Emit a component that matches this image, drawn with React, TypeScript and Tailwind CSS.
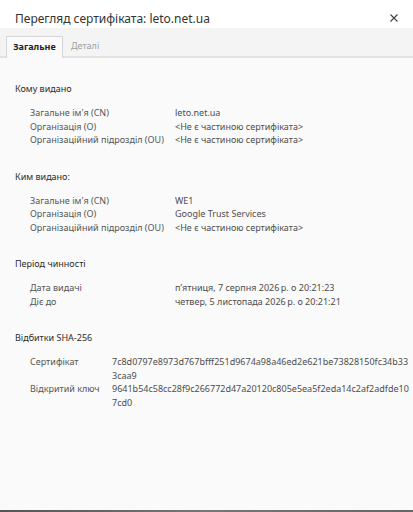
import React from "react";

const font = { fontFamily: '"Noto Sans", "Open Sans", sans-serif' };

function Row({ label, value, valueX = 175 }: { label: string; value: React.ReactNode; valueX?: number }) {
  return (
    <div className="flex leading-[13.5px]">
      <div
        className={"shrink-0 pl-[30px] text-[#555] " + (valueX === 175 ? "w-[175px]" : "w-[112px]")}
      >
        {label}
      </div>
      <div className="text-[#4d4d4d]">{value}</div>
    </div>
  );
}

function Section({ title, children, first }: { title: string; children: React.ReactNode; first?: boolean }) {
  return (
    <div className={first ? "" : "mt-[23px]"}>
      <div className="h-[14px] pl-[15px] leading-[14px] text-[#2b2b2b]">{title}</div>
      <div className="mt-[10px]">{children}</div>
    </div>
  );
}

export default function App() {
  return (
    <div className="flex h-[512px] w-[413px] flex-col overflow-hidden bg-[#fafafa] text-[9px]" style={font}>
      <div className="flex h-[28px] shrink-0 items-center justify-between bg-white pl-[15px] pr-[15px] pt-[9px]">
        <div className="text-[12px] leading-[19px] text-[#333]">Перегляд сертифіката: leto.net.ua</div>
        <svg width="8" height="8" viewBox="0 0 8 8" className="mb-[2px]">
          <path d="M0.5 0.5L7.5 7.5M7.5 0.5L0.5 7.5" stroke="#444" strokeWidth="1.2" />
        </svg>
      </div>
      <div className="flex h-[30px] shrink-0 items-end border-b-2 border-[#e2e2e2] bg-[#f4f4f4] pl-[6px]">
        <div className="-mb-[2px] flex h-[22px] w-[57px] items-center justify-center border border-b-0 border-[#d6d6d6] bg-[#fafafa] pb-[1px] font-bold text-[#222]">
          Загальне
        </div>
        <div className="flex h-[20px] items-center pl-[8px] text-[#a0a0a0]">Деталі</div>
      </div>
      <div className="flex-1 pt-[24px]">
        <Section title="Кому видано" first>
          <Row label="Загальне ім'я (CN)" value="leto.net.ua" />
          <Row label="Організація (O)" value="<Не є частиною сертифіката>" />
          <Row label="Організаційний підрозділ (OU)" value="<Не є частиною сертифіката>" />
        </Section>
        <Section title="Ким видано:">
          <Row label="Загальне ім'я (CN)" value="WE1" />
          <Row label="Організація (O)" value="Google Trust Services" />
          <Row label="Організаційний підрозділ (OU)" value="<Не є частиною сертифіката>" />
        </Section>
        <Section title="Період чинності">
          <Row label="Дата видачі" value={"п’ятниця, 7 серпня 2026\u202Fр. о 20:21:23"} />
          <Row label="Діє до" value={"четвер, 5 листопада 2026\u202Fр. о 20:21:21"} />
        </Section>
        <Section title="Відбитки SHA-256">
          <Row
            valueX={112}
            label="Сертифікат"
            value={
              <>
                <div>7c8d0797e8973d767bfff251d9674a98a46ed2e621be73828150fc34b33</div>
                <div>3caa9</div>
              </>
            }
          />
          <Row
            valueX={112}
            label="Відкритий ключ"
            value={
              <>
                <div>9641b54c58cc28f9c266772d47a20120c805e5ea5f2eda14c2af2adfde10</div>
                <div>7cd0</div>
              </>
            }
          />
        </Section>
      </div>
      <div className="h-[2px] shrink-0 bg-gradient-to-r from-[#555] via-[#777] to-[#666]" />
    </div>
  );
}
